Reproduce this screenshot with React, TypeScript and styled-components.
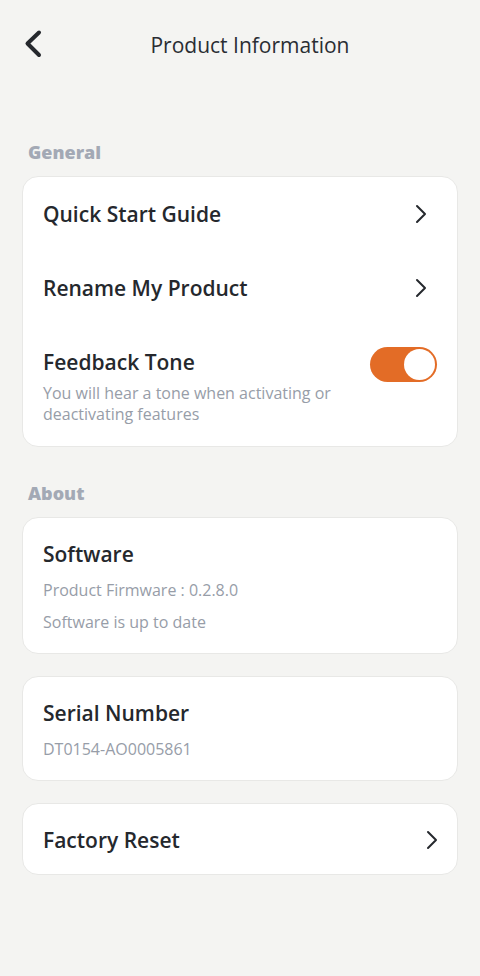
import React, { useState } from 'react';
import styled, { createGlobalStyle } from 'styled-components';

const GlobalStyle = createGlobalStyle`
  html, body {
    margin: 0;
    padding: 0;
    background: #f4f4f2;
  }
  body {
    font-family: "Open Sans", "Noto Sans", sans-serif;
    color: #25282d;
  }
  * {
    box-sizing: border-box;
  }
`;

const Page = styled.div`
  width: 480px;
  min-height: 976px;
  background: #f4f4f2;
  padding: 0 22px 40px;
`;

const Header = styled.header`
  display: grid;
  grid-template-columns: 42px 1fr 22px;
  align-items: center;
  height: 90px;
`;

const BackButton = styled.button`
  display: flex;
  align-items: center;
  background: none;
  border: 0;
  padding: 0;
  margin-top: -2px;
  color: #25282d;
  cursor: pointer;
`;

const Title = styled.h1`
  margin: 0;
  text-align: center;
  font-size: 21px;
  font-weight: 400;
  color: #2a2d33;
`;

const SectionLabel = styled.h2<{ $first?: boolean }>`
  margin: ${(p) => (p.$first ? '50px' : '34px')} 0 12px 6px;
  font-size: 18px;
  line-height: 24px;
  font-weight: 800;
  color: #a3a9b5;
`;

const Card = styled.section<{ $spaced?: boolean }>`
  background: #fff;
  border: 1px solid #e8e8e6;
  border-radius: 16px;
  padding: ${(p) => (p.$spaced ? '22px 20px 20px' : '0 20px 21px')};
  & + & {
    margin-top: 22px;
  }
`;

const Row = styled.div<{ $tall?: boolean }>`
  display: flex;
  align-items: center;
  justify-content: space-between;
  min-height: ${(p) => (p.$tall ? '74px' : '28px')};
  cursor: pointer;
`;

const ToggleRow = styled.div`
  display: flex;
  align-items: flex-start;
  justify-content: space-between;
  padding-top: 23px;
`;

const ItemTitle = styled.div`
  font-size: 21px;
  line-height: 28px;
  font-weight: 600;
  color: #25282d;
`;

const SubText = styled.p<{ $gap?: number }>`
  margin: ${(p) => p.$gap ?? 11}px 0 0;
  font-size: 16px;
  line-height: 21px;
  color: #979da8;
  max-width: 310px;
`;

const ChevronBox = styled.span<{ $inset: number }>`
  display: flex;
  margin-right: ${(p) => p.$inset}px;
  color: #25282d;
`;

const Switch = styled.button<{ $on: boolean }>`
  flex: none;
  display: flex;
  justify-content: ${(p) => (p.$on ? 'flex-end' : 'flex-start')};
  align-items: center;
  width: 67px;
  height: 35px;
  padding: 2px;
  margin-top: -1px;
  border: 0;
  border-radius: 18px;
  background: ${(p) => (p.$on ? '#e36c26' : '#c9ccd2')};
  cursor: pointer;
`;

const Knob = styled.span`
  width: 31px;
  height: 31px;
  border-radius: 50%;
  background: #fff;
`;

const Chevron = ({ inset = 0 }: { inset?: number }) => (
  <ChevronBox $inset={inset}>
    <svg width="13" height="20" viewBox="0 0 13 20" fill="none">
      <path d="M3 2 L11 10 L3 18" stroke="currentColor" strokeWidth="2" strokeLinecap="round" strokeLinejoin="round" />
    </svg>
  </ChevronBox>
);

const App = () => {
  const [tone, setTone] = useState(true);

  return (
    <Page>
      <GlobalStyle />
      <Header>
        <BackButton aria-label="Back">
          <svg width="24" height="32" viewBox="0 0 24 32" fill="none">
            <path d="M17 4.5 L5.5 15.5 L17 27" stroke="currentColor" strokeWidth="4" strokeLinecap="round" strokeLinejoin="round" />
          </svg>
        </BackButton>
        <Title>Product Information</Title>
        <span />
      </Header>

      <SectionLabel $first>General</SectionLabel>
      <Card>
        <Row $tall>
          <ItemTitle>Quick Start Guide</ItemTitle>
          <Chevron inset={10} />
        </Row>
        <Row $tall>
          <ItemTitle>Rename My Product</ItemTitle>
          <Chevron inset={10} />
        </Row>
        <ToggleRow>
          <div>
            <ItemTitle>Feedback Tone</ItemTitle>
            <SubText $gap={7}>You will hear a tone when activating or deactivating features</SubText>
          </div>
          <Switch $on={tone} onClick={() => setTone(!tone)} aria-pressed={tone}>
            <Knob />
          </Switch>
        </ToggleRow>
      </Card>

      <SectionLabel>About</SectionLabel>
      <Card $spaced>
        <ItemTitle>Software</ItemTitle>
        <SubText $gap={12}>Product Firmware : 0.2.8.0</SubText>
        <SubText>Software is up to date</SubText>
      </Card>
      <Card $spaced>
        <ItemTitle>Serial Number</ItemTitle>
        <SubText $gap={12}>DT0154-AO0005861</SubText>
      </Card>
      <Card $spaced>
        <Row>
          <ItemTitle>Factory Reset</ItemTitle>
          <Chevron inset={-1} />
        </Row>
      </Card>
    </Page>
  );
};

export default App;
